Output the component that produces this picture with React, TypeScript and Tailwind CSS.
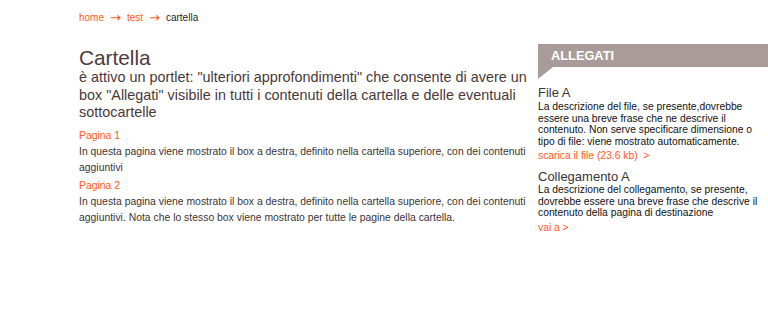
export default function App() {
  const font = { fontFamily: '"Liberation Sans", Arial, Helvetica, sans-serif' };
  const arrow = { fontFamily: '"DejaVu Sans", sans-serif' };
  return (
    <div className="w-[768px] h-[312px] bg-white overflow-hidden" style={font}>
      {/* Breadcrumb */}
      <div className="pl-[79px] pt-[12px] text-[10px] leading-[12px] flex items-center gap-[6px] h-[24px] -mb-[0px]">
        <span className="text-[#ff5a1e]">home</span>
        <span className="text-[#ff5a1e] text-[13px] leading-[12px]" style={arrow}>→</span>
        <span className="text-[#ff5a1e]">test</span>
        <span className="text-[#ff5a1e] text-[13px] leading-[12px]" style={arrow}>→</span>
        <span className="text-[#222]">cartella</span>
      </div>

      <div className="flex pl-[79px]">
        {/* Main content */}
        <div className="w-[451px] pt-[23px]">
          <h1 className="text-[20.8px] leading-[22px] text-[#4d3b3b]">Cartella</h1>
          <p className="text-[14.4px] leading-[17.5px] text-[#4a3838] pr-[2px]">
            è attivo un portlet: "ulteriori approfondimenti" che consente di avere un box "Allegati" visibile in tutti i contenuti della cartella e delle eventuali sottocartelle
          </p>

          <div className="mt-[6.5px]">
            <div className="text-[10.4px] leading-[16px] text-[#ff5a1e]">Pagina 1</div>
            <p className="text-[10.4px] leading-[16px] text-[#3d3434]">
              In questa pagina viene mostrato il box a destra, definito nella cartella superiore, con dei contenuti aggiuntivi
            </p>
          </div>
          <div className="mt-[2px]">
            <div className="text-[10.4px] leading-[16px] text-[#ff5a1e]">Pagina 2</div>
            <p className="text-[10.4px] leading-[16px] text-[#3d3434]">
              In questa pagina viene mostrato il box a destra, definito nella cartella superiore, con dei contenuti aggiuntivi. Nota che lo stesso box viene mostrato per tutte le pagine della cartella.
            </p>
          </div>
        </div>

        {/* Sidebar */}
        <div className="ml-[8px] w-[230px] pt-[20px]">
          <div className="h-[23px] bg-[#a99b99] pl-[13px] flex items-center">
            <span className="text-white font-bold text-[12.8px]">ALLEGATI</span>
          </div>
          <svg width="15" height="12" viewBox="0 0 15 12" className="block">
            <polygon points="0,0 15,0 0,12" fill="#a99b99" />
          </svg>

          <div className="mt-[7px] text-[13px] leading-[14px] text-[#3d3434]">File A</div>
          <p className="mt-[1px] text-[10.3px] leading-[11.5px] text-[#111] pr-[4px]">
            La descrizione del file, se presente,dovrebbe essere una breve frase che ne descrive il contenuto. Non serve specificare dimensione o tipo di file: viene mostrato automaticamente.
          </p>
          <div className="mt-[2px] text-[10.3px] leading-[14px] text-[#ff5a1e]">
            scarica il file (23.6 kb) &nbsp;&gt;
          </div>

          <div className="mt-[7px] text-[13px] leading-[14px] text-[#3d3434]">Collegamento A</div>
          <p className="text-[10.3px] leading-[11.5px] text-[#111] pr-[4px]">
            La descrizione del collegamento, se presente, dovrebbe essere una breve frase che descrive il contenuto della pagina di destinazione
          </p>
          <div className="mt-[2px] text-[10.3px] leading-[14px] text-[#ff5a1e]">vai a &gt;</div>
        </div>
      </div>
    </div>
  );
}
